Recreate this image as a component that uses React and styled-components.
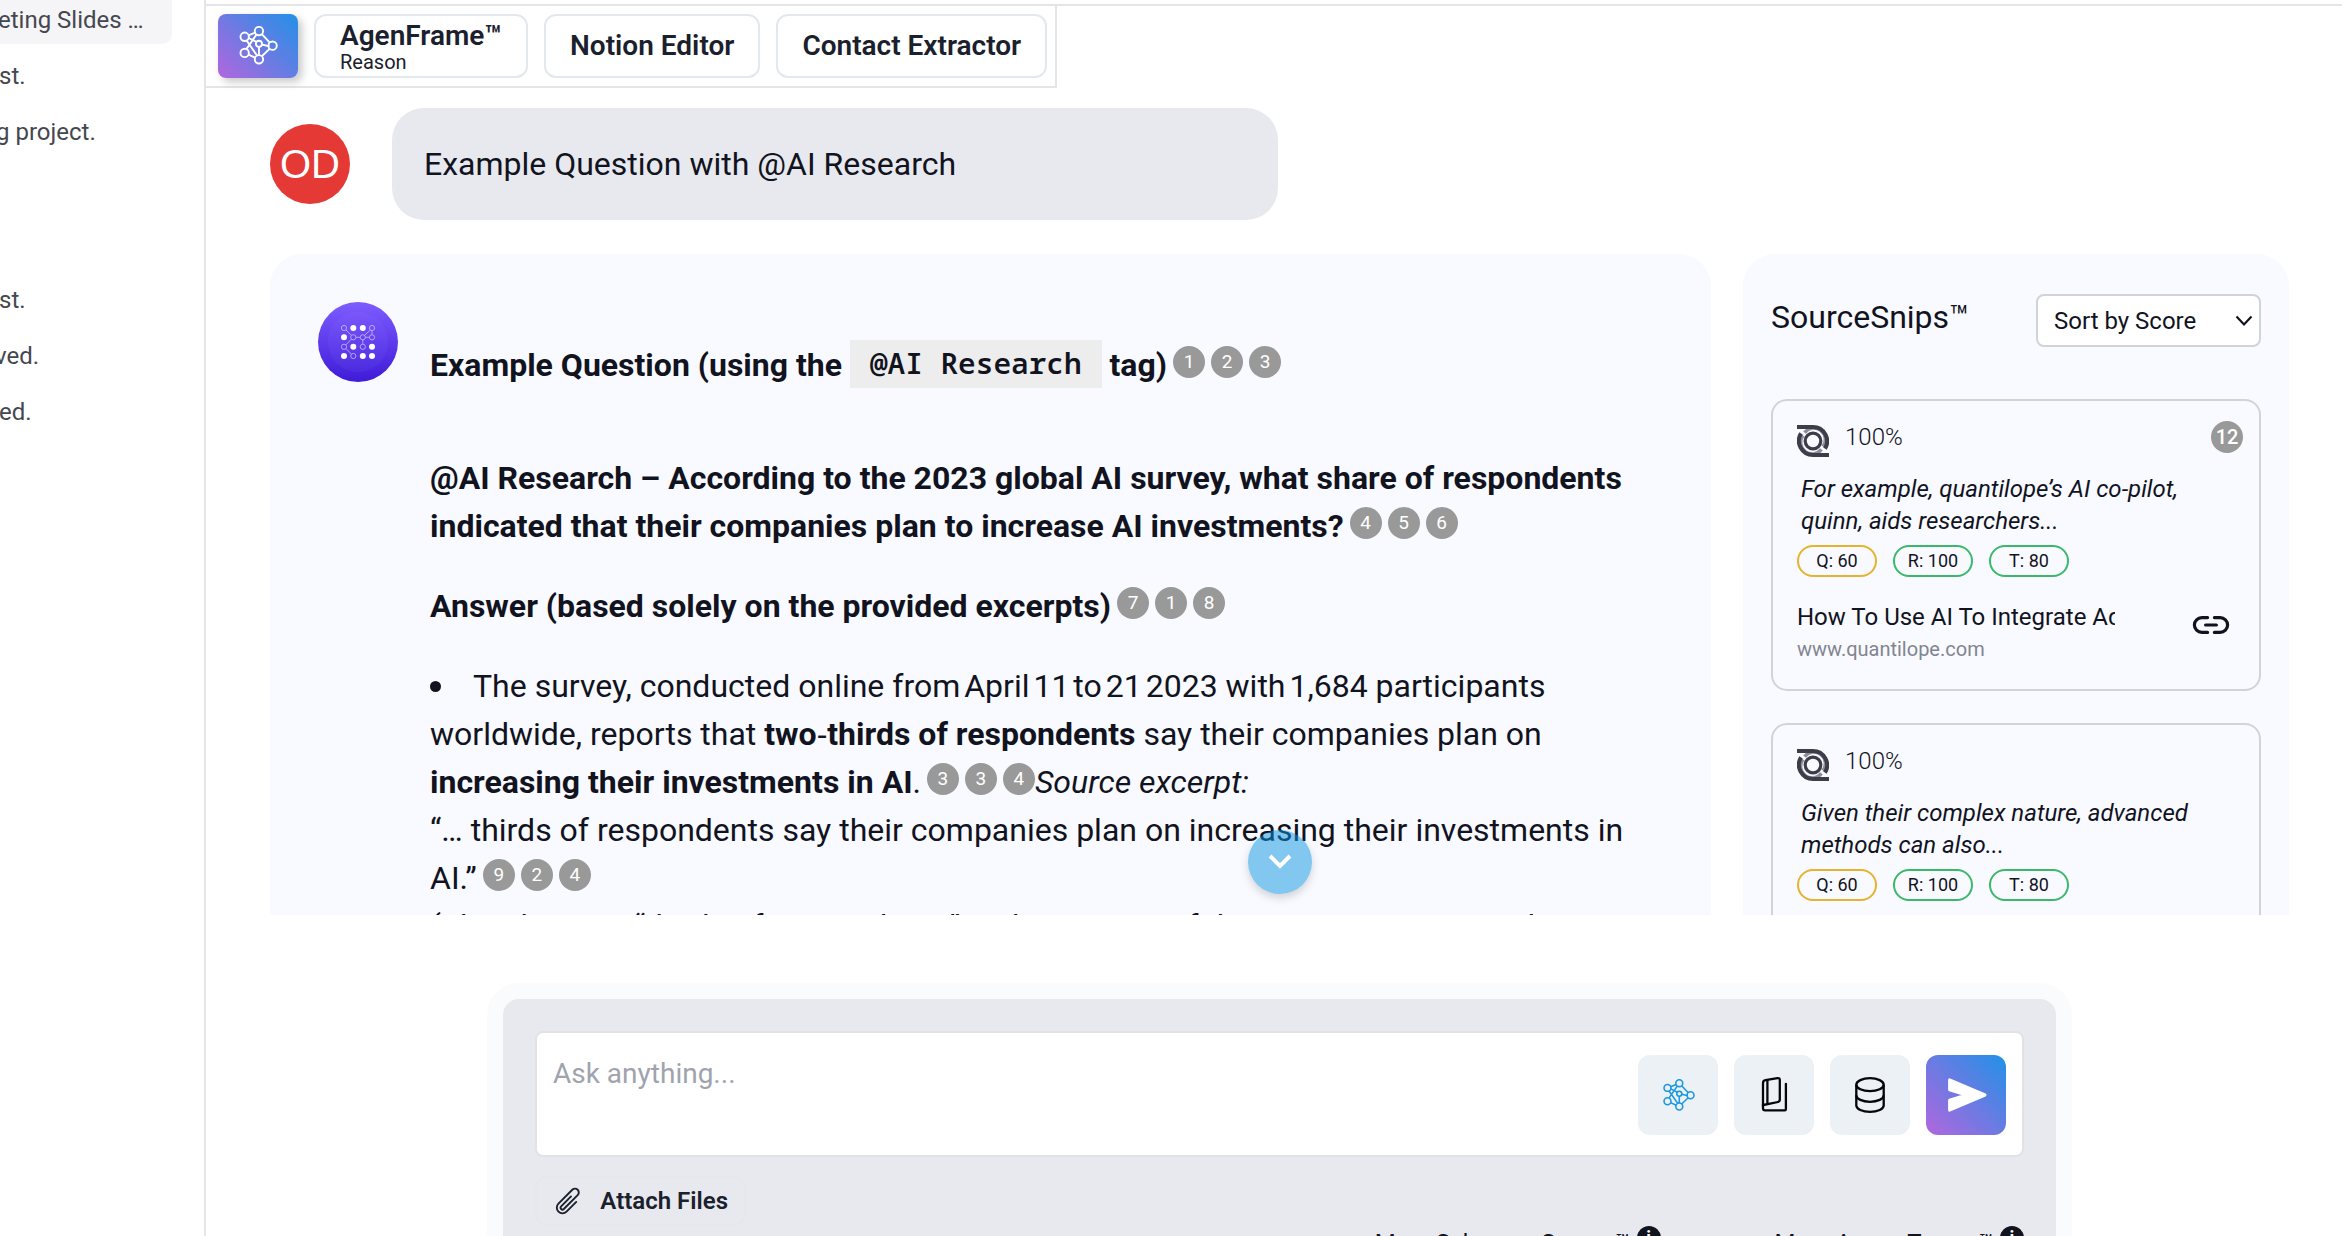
import styled, { createGlobalStyle, css } from 'styled-components';

const GlobalStyle = createGlobalStyle`
  * { box-sizing: border-box; }
  body {
    margin: 0;
    background: #fff;
    color: #11131e;
    font-family: Roboto, "Liberation Sans", sans-serif;
    overflow: hidden;
  }
`;

const history = [
  { text: 'eting Slides …', active: true, shift: -2 },
  { text: 'st.', shift: -1 },
  { text: 'g project.', shift: -4 },
  { text: '' },
  { text: '' },
  { text: 'st.', shift: -1 },
  { text: 'ved.', shift: -5 },
  { text: 'ed.', shift: -1 },
];

const snips = [
  {
    id: 12,
    quote: ['For example, quantilope’s AI co-pilot,', 'quinn, aids researchers...'],
    title: 'How To Use AI To Integrate Advanced Methods',
  },
  {
    quote: ['Given their complex nature, advanced', 'methods can also...'],
    title: 'How To Use AI To Integrate Advanced Methods',
  },
];

function NetworkIcon({ size, color }) {
  const nodes = [[7, 10.3], [22, 4.3], [36.3, 19.7], [22, 34], [7, 27.3]];
  return (
    <svg width={size} height={size} viewBox="0 0 42 40" fill="none" stroke={color} strokeWidth="2">
      <path d="M11 8.8L18 5.9M25 7.6L33.4 16.4M33.4 22.8L25 30.8M11 29.1L18 32.3M33 20.4L25 18.4M22 21V29.6M8.8 23.3L19.6 7.8M9 14.2L20 30M11.2 11.6L19.6 15.8" />
      {nodes.map(([x, y]) => <circle key={`${x}-${y}`} cx={x} cy={y} r="4.4" />)}
      <circle cx="22" cy="17.7" r="3.2" />
    </svg>
  );
}

function BotIcon() {
  const at = [26, 35.3, 44.8, 54];
  const filled = ['1-0', '2-0', '0-1', '1-2', '3-2', '0-3', '2-3', '3-3'];
  return (
    <svg width="80" height="80" viewBox="0 0 80 80">
      <defs>
        <linearGradient id="bot" x1="0" y1="0" x2="0" y2="1">
          <stop offset="0" stopColor="#7d5cff" />
          <stop offset="1" stopColor="#3f1bd8" />
        </linearGradient>
        <linearGradient id="botInner" x1="0" y1="0" x2="0" y2="1">
          <stop offset="0" stopColor="#7a58fb" />
          <stop offset="1" stopColor="#4c2be0" />
        </linearGradient>
      </defs>
      <circle cx="40" cy="40" r="40" fill="url(#bot)" />
      <circle cx="40" cy="40" r="30" fill="url(#botInner)" />
      <path d="M28 28L33.4 33.4M38 35.3H42M47.5 35.3H51.4M46.6 33.2L52.4 28M54 28.6V32.6M44.8 38V42M33.3 37.2L28 42.8M28 46.7L33.4 52" stroke="#c9bdff" strokeWidth="0.8" />
      {at.map((y, row) => at.map((x, col) => {
        const on = filled.includes(`${col}-${row}`);
        return <circle key={`${col}-${row}`} cx={x} cy={y} r={on ? 3 : 2.6} fill={on ? '#fff' : 'none'} stroke={on ? 'none' : '#c9bdff'} strokeWidth="0.8" />;
      }))}
    </svg>
  );
}

function PagesIcon() {
  return (
    <svg width="40" height="40" viewBox="0 0 40 40" fill="none" stroke="#05070a" strokeWidth="2.3" strokeLinecap="round" strokeLinejoin="round">
      <path d="M9 31.3V8.3Q9 5.6 11.5 5.2L23.5 3.1Q25.8 2.9 25.8 5V24.6Q25.8 26.6 24 27L9.4 30" />
      <path d="M13.4 5.2V28.4" />
      <path d="M9 29.4V33Q9 35.4 11 35.4H30.8Q31.9 35.4 31.9 34V8.8" />
    </svg>
  );
}

function StackIcon() {
  return (
    <svg width="40" height="40" viewBox="0 0 40 40" fill="none" stroke="#05070a" strokeWidth="2.3">
      <ellipse cx="20" cy="9.7" rx="13.7" ry="6.5" />
      <path d="M6.3 9.7V30.5C6.3 34 12.4 36.9 20 36.9S33.7 34 33.7 30.5V9.7" />
      <path d="M6.3 20.3C6.3 23.9 12.4 26.8 20 26.8S33.7 23.9 33.7 20.3" />
    </svg>
  );
}

function SendIcon() {
  return (
    <svg width="44" height="44" viewBox="0 0 44 44" fill="#fff" stroke="#fff" strokeWidth="3" strokeLinejoin="round">
      <path d="M5.6 6.8L41 22L5.6 37.2V27.3L22.5 22L5.6 16.7Z" />
    </svg>
  );
}

function ClipIcon() {
  return (
    <svg width="32" height="32" viewBox="0 0 24 24" fill="none" stroke="#1a202c" strokeWidth="1.5" strokeLinecap="round" strokeLinejoin="round">
      <path d="m18.375 12.739-7.693 7.693a4.5 4.5 0 0 1-6.364-6.364l10.94-10.94A3 3 0 1 1 19.5 7.372L8.552 18.32m.009-.01-.01.01m5.699-9.941-7.81 7.81a1.5 1.5 0 0 0 2.112 2.13" />
    </svg>
  );
}

function LinkIcon() {
  return (
    <svg width="38" height="20" viewBox="0 0 38 20" fill="none" stroke="#11131e" strokeWidth="3.2" strokeLinecap="round">
      <path d="M15.6 2.6H9.8A7.4 7.4 0 0 0 9.8 17.4H15.6M22.4 2.6H28.2A7.4 7.4 0 0 1 28.2 17.4H22.4M13.6 10H24.4" />
    </svg>
  );
}

function SiteLogo() {
  return (
    <svg width="32" height="32" viewBox="0 0 32 32" fill="none" stroke="#3b3d49">
      <path d="M7.6 7.6A11 11 0 0 1 26 21.6M24.4 24.4A11 11 0 0 1 6 10.4" strokeWidth="3.4" stroke="#8b8d97" />
      <path d="M0 2H16A14.2 14.2 0 0 1 28 23.6" strokeWidth="4" />
      <path d="M32 30H16A14.2 14.2 0 0 1 4 8.4" strokeWidth="4" />
      <circle cx="16" cy="16" r="7.8" strokeWidth="3.2" />
    </svg>
  );
}

export default function App() {
  return (
    <Page>
      <GlobalStyle />
      <Sidebar>
        {history.map((item, i) => <HistoryItem key={i} $active={item.active} $shift={item.shift}>{item.text}</HistoryItem>)}
      </Sidebar>
      <Main>
        <Toolbar>
          <GradientTile $shadow><NetworkIcon size={40} color="#fff" /></GradientTile>
          <ToolButton $stacked>
            <span>AgenFrame™</span>
            <small>Reason</small>
          </ToolButton>
          <ToolButton>Notion Editor</ToolButton>
          <ToolButton>Contact Extractor</ToolButton>
        </Toolbar>

        <Chat>
          <Question>
            <UserAvatar>OD</UserAvatar>
            <Bubble>Example Question with @AI Research</Bubble>
          </Question>
          <Columns>
            <AnswerCard>
              <BotIcon />
              <Answer />
            </AnswerCard>
            <Sources>
              <SourcesHeader>
                <span>SourceSnips™</span>
                <Sort>
                  Sort by Score
                  <svg width="18" height="12" viewBox="0 0 18 12" fill="none" stroke="#11131e" strokeWidth="2.2"><path d="M1.5 1.5L9 9.4L16.5 1.5" /></svg>
                </Sort>
              </SourcesHeader>
              {snips.map((snip) => <Snip key={snip.quote[0]} {...snip} />)}
            </Sources>
          </Columns>
          <ScrollDown>
            <svg width="28" height="18" viewBox="0 0 28 18" fill="none" stroke="#fff" strokeWidth="4"><path d="M4 3L14 13L24 3" /></svg>
          </ScrollDown>
        </Chat>

        <Composer>
          <ComposerInner>
            <InputBox>
              <Placeholder>Ask anything...</Placeholder>
              <Tile><NetworkIcon size={33} color="#1b98e0" /></Tile>
              <Tile><PagesIcon /></Tile>
              <Tile><StackIcon /></Tile>
              <GradientTile $square><SendIcon /></GradientTile>
            </InputBox>
            <Attach><ClipIcon />Attach Files</Attach>
            <Hints>
              <Hint>More Schemas Source™<Info>i</Info></Hint>
              <Hint>More Acces Traces™<Info>i</Info></Hint>
            </Hints>
          </ComposerInner>
        </Composer>
      </Main>
    </Page>
  );
}

function Cites({ ids }) {
  return <CiteGroup>{ids.map((id, i) => <Cite key={i}>{id}</Cite>)}</CiteGroup>;
}

function Answer() {
  return (
    <AnswerText>
      <h3>Example Question (using the <Code>@AI Research</Code> tag)<Cites ids={[1, 2, 3]} /></h3>
      <p>
        <strong>
          @AI Research – According to the 2023 global AI survey, what share of respondents<br />
          indicated that their companies plan to increase AI investments?
        </strong>
        <Cites ids={[4, 5, 6]} />
      </p>
      <p><strong>Answer (based solely on the provided excerpts)</strong><Cites ids={[7, 1, 8]} /></p>
      <Bulleted>
        The survey, conducted online from{'\u202f'}April{'\u202f'}11{'\u202f'}to{'\u202f'}21{'\u202f'}2023 with{'\u202f'}1,684 participants<br />
        worldwide, reports that <strong>two<Hyphen>{'\u2011'}</Hyphen>thirds of respondents</strong> say their companies plan on<br />
        <strong>increasing their investments in AI</strong>.<Cites ids={[3, 3, 4]} /><em>Source excerpt:</em><br />
        “… thirds of respondents say their companies plan on increasing their investments in<br />
        AI.”<Cites ids={[9, 2, 4]} /><br />
        (The phrasing “thirds of respondents” in the context of the report is in a record
      </Bulleted>
    </AnswerText>
  );
}

function Snip({ id, quote, title }) {
  return (
    <SnipCard>
      <SnipTop>
        <SiteLogo />
        <Percent>100%</Percent>
        {id && <Cite $strong>{id}</Cite>}
      </SnipTop>
      <Quote>{quote[0]}<br />{quote[1]}</Quote>
      <Pills>
        <Pill $color="#e5b32d">Q: 60</Pill>
        <Pill $color="#3bb869">R: 100</Pill>
        <Pill $color="#3bb869">T: 80</Pill>
      </Pills>
      <SnipFooter>
        <div>
          <SnipTitle>{title}</SnipTitle>
          <SnipUrl>www.quantilope.com</SnipUrl>
        </div>
        <LinkIcon />
      </SnipFooter>
    </SnipCard>
  );
}

const Page = styled.div`
  display: flex;
  width: 2342px;
  height: 1236px;
  overflow: hidden;
`;
const Sidebar = styled.aside`
  flex: none;
  width: 206px;
  border-right: 2px solid #e5e5e8;
  display: flex;
  flex-direction: column;
  gap: 8px;
  margin-top: -4px;
  overflow: hidden;
`;
const HistoryItem = styled.div`
  flex: none;
  width: 172px;
  height: 48px;
  line-height: 48px;
  font-size: 24px;
  color: #45474f;
  white-space: nowrap;
  text-indent: ${(p) => p.$shift || 0}px;
  border-radius: 0 0 10px 0;
  background: ${(p) => (p.$active ? '#f5f5f8' : 'transparent')};
`;
const Main = styled.main`
  flex: 1;
  min-width: 0;
  margin-top: 4px;
  border-top: 2px solid #e5e5e8;
`;
const Toolbar = styled.div`
  display: flex;
  gap: 16px;
  width: 851px;
  height: 82px;
  padding: 8px 8px 8px 12px;
  border-right: 2px solid #e5e5e8;
  border-bottom: 2px solid #e5e5e8;
`;
const tile = css`
  flex: none;
  display: flex;
  align-items: center;
  justify-content: center;
  width: 80px;
`;
const GradientTile = styled.div`
  ${tile}
  height: ${(p) => (p.$square ? '80px' : '64px')};
  border-radius: ${(p) => (p.$square ? '12px' : '8px')};
  background: linear-gradient(45deg, #b266de, #2191e7);
  box-shadow: ${(p) => (p.$shadow ? '4px 4px 8px rgba(0, 0, 0, 0.22)' : 'none')};
`;
const Tile = styled.div`
  ${tile}
  height: 80px;
  border-radius: 12px;
  background: #ecf1f5;
`;
const ToolButton = styled.div`
  flex: none;
  display: flex;
  flex-direction: column;
  justify-content: center;
  height: 64px;
  padding: ${(p) => (p.$stacked ? '2px 24px 0' : '0 24px')};
  border: 2px solid #e2e8ee;
  border-radius: 12px;
  color: #1a202c;
  font-size: 28px;
  font-weight: 600;
  line-height: 30px;
  white-space: nowrap;
  small {
    font-size: 20px;
    font-weight: 400;
    line-height: 22px;
  }
`;
const Chat = styled.section`
  position: relative;
  height: 827px;
  padding: 20px 53px 0 64px;
  overflow: hidden;
`;
const Question = styled.div`
  display: flex;
  align-items: center;
  gap: 42px;
`;
const UserAvatar = styled.div`
  width: 80px;
  height: 80px;
  border-radius: 50%;
  background: #e53935;
  color: #fff;
  font: 40px/80px "Liberation Sans", sans-serif;
  text-align: center;
`;
const Bubble = styled.div`
  width: 886px;
  height: 112px;
  padding: 0 32px;
  border-radius: 32px;
  background: #e8e9ee;
  font-size: 32px;
  line-height: 112px;
`;
const Columns = styled.div`
  display: flex;
  gap: 32px;
  margin-top: 34px;
`;
const AnswerCard = styled.article`
  flex: 1;
  min-width: 0;
  height: 760px;
  display: flex;
  align-items: flex-start;
  gap: 32px;
  padding: 48px;
  border-radius: 32px;
  background: #f9faff;
`;
const AnswerText = styled.div`
  padding-top: 39px;
  font-size: 32px;
  line-height: 48px;
  white-space: nowrap;
  h3 {
    margin: 0 0 65px;
    font-size: 32px;
    font-weight: 700;
  }
  p {
    margin: 0 0 32px;
  }
  strong {
    font-weight: 700;
  }
`;
const Bulleted = styled.div`
  &::before {
    content: '';
    display: inline-block;
    width: 11px;
    height: 11px;
    margin-right: 32px;
    border-radius: 50%;
    background: #11131e;
    vertical-align: 5px;
  }
`;
const Hyphen = styled.span`
  font-family: "Liberation Sans", sans-serif;
  font-weight: 400;
`;
const Code = styled.code`
  display: inline-block;
  height: 48px;
  margin-top: -1px;
  padding: 0 20px;
  background: #ededed;
  font: 600 29.4px/46px "Noto Sans Mono", "DejaVu Sans Mono", monospace;
  vertical-align: top;
`;
const CiteGroup = styled.span`
  display: inline-flex;
  gap: 6px;
  margin: 5px 0 0 6px;
  vertical-align: top;
`;
const Cite = styled.span`
  width: 32px;
  height: 32px;
  border-radius: 50%;
  background: #999;
  color: #fff;
  font-size: ${(p) => (p.$strong ? '20px' : '19px')};
  font-weight: ${(p) => (p.$strong ? 500 : 400)};
  line-height: 32px;
  text-align: center;
`;
const Sources = styled.aside`
  flex: none;
  width: 546px;
  height: 760px;
  padding: 40px 28px;
  border-radius: 32px;
  background: #f9faff;
`;
const SourcesHeader = styled.div`
  display: flex;
  justify-content: space-between;
  height: 105px;
  font-size: 32px;
  line-height: 46px;
`;
const Sort = styled.div`
  display: flex;
  align-items: center;
  justify-content: space-between;
  width: 225px;
  height: 53px;
  padding: 0 6px 0 16px;
  border: 2px solid #d1d3d8;
  border-radius: 8px;
  background: #fff;
  font-size: 24px;
`;
const SnipCard = styled.div`
  height: 292px;
  margin-bottom: 32px;
  padding: 20px 16px 0 24px;
  border: 2px solid #d1d3d8;
  border-radius: 16px;
`;
const SnipTop = styled.div`
  display: flex;
  height: 36px;
  svg {
    margin-top: 4px;
  }
  ${Cite} {
    margin-left: auto;
  }
`;
const Percent = styled.span`
  margin-left: 16px;
  font-size: 24px;
  font-weight: 300;
  line-height: 32px;
`;
const Quote = styled.div`
  margin: 16px 0 0 4px;
  font-size: 24px;
  font-style: italic;
  line-height: 32px;
  white-space: nowrap;
`;
const Pills = styled.div`
  display: flex;
  gap: 16px;
  margin-top: 8px;
`;
const Pill = styled.span`
  width: 80px;
  height: 32px;
  border: 2px solid ${(p) => p.$color};
  border-radius: 16px;
  font-size: 18px;
  line-height: 28px;
  text-align: center;
`;
const SnipFooter = styled.div`
  display: flex;
  align-items: flex-start;
  justify-content: space-between;
  margin: 24px 13px 0 0;
  > svg {
    margin-top: 14px;
  }
`;
const SnipTitle = styled.div`
  width: 318px;
  overflow: hidden;
  white-space: nowrap;
  font-size: 24px;
  line-height: 32px;
`;
const SnipUrl = styled.div`
  color: #82858f;
  font-size: 20px;
  line-height: 32px;
`;
const ScrollDown = styled.button`
  position: absolute;
  left: 1042px;
  bottom: 21px;
  display: flex;
  align-items: center;
  justify-content: center;
  width: 64px;
  height: 64px;
  padding: 0;
  border: 0;
  border-radius: 50%;
  background: rgba(9, 148, 225, 0.5);
  box-shadow: 0 4px 8px rgba(0, 0, 0, 0.16);
`;
const Composer = styled.div`
  width: 1585px;
  height: 300px;
  margin: 68px 0 0 281px;
  padding: 16px 16px 0;
  border-radius: 32px;
  background: #fafbfd;
`;
const ComposerInner = styled.div`
  height: 100%;
  padding: 32px 32px 0;
  border-radius: 16px;
  background: #e8e9ee;
`;
const InputBox = styled.div`
  display: flex;
  gap: 16px;
  height: 126px;
  padding: 22px 16px 0;
  border: 2px solid #e0e2e6;
  border-radius: 8px;
  background: #fff;
`;
const Placeholder = styled.span`
  flex: 1;
  padding-top: 1px;
  color: #9fa3ae;
  font-size: 28px;
  line-height: 36px;
`;
const Attach = styled.div`
  display: inline-flex;
  align-items: center;
  gap: 17px;
  width: 211px;
  height: 50px;
  margin-top: 19px;
  padding: 0 16px;
  border: 2px solid #e4e8ec;
  border-radius: 12px;
  color: #1a202c;
  font-size: 24px;
  font-weight: 600;
  white-space: nowrap;
`;
const Hints = styled.div`
  display: flex;
  justify-content: flex-end;
  gap: 114px;
`;
const Hint = styled.div`
  display: flex;
  gap: 6px;
  padding-top: 3px;
  font-size: 24px;
  line-height: 28px;
  white-space: nowrap;
`;
const Info = styled.span`
  width: 24px;
  height: 24px;
  margin-top: -3px;
  border-radius: 50%;
  background: #11131e;
  color: #fff;
  font-size: 18px;
  font-weight: 700;
  line-height: 24px;
  text-align: center;
`;
